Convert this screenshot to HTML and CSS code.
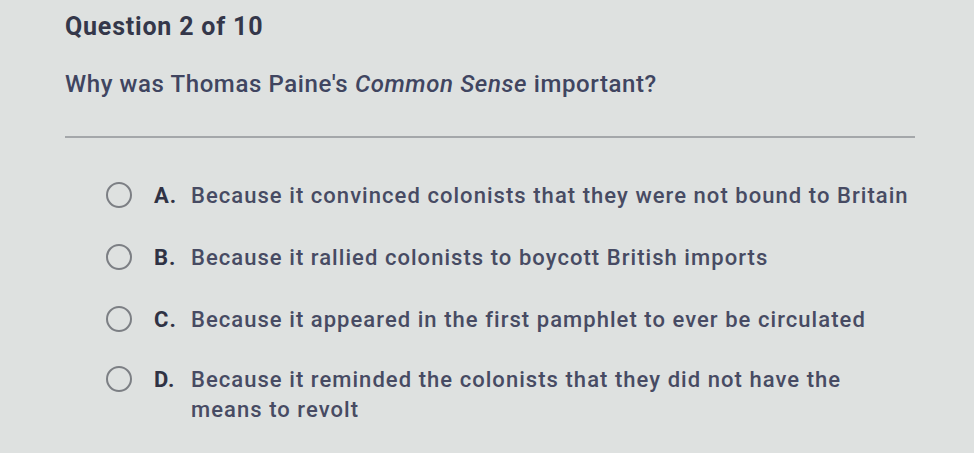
FILE: index.html
```html
<!DOCTYPE html>
<html>
<head>
<meta charset="utf-8">
<link rel="stylesheet" href="styles.css">
</head>
<body>
<div class="page">
  <h1 class="title">Question 2 of 10</h1>
  <p class="question">Why was Thomas Paine's <em>Common Sense</em> important?</p>
  <hr class="divider">
  <ul class="options">
    <li class="option"><span class="radio"></span><span class="letter">A.</span><span class="text">Because it convinced colonists that they were not bound to Britain</span></li>
    <li class="option"><span class="radio"></span><span class="letter">B.</span><span class="text">Because it rallied colonists to boycott British imports</span></li>
    <li class="option"><span class="radio"></span><span class="letter">C.</span><span class="text">Because it appeared in the first pamphlet to ever be circulated</span></li>
    <li class="option"><span class="radio"></span><span class="letter">D.</span><span class="text">Because it reminded the colonists that they did not have the<br>means to revolt</span></li>
  </ul>
</div>
</body>
</html>
```
FILE: styles.css
```css
html, body {
  margin: 0;
  padding: 0;
}
body {
  background: #dee1e0;
  font-family: Roboto, "Liberation Sans", Arial, sans-serif;
  color: #474b63;
  width: 974px;
  height: 453px;
  overflow: hidden;
}
.page {
  padding: 12px 0 0 65px;
  width: 850px;
}
.title {
  margin: 0;
  font-size: 25px;
  font-weight: 700;
  letter-spacing: 0.8px;
  color: #34374a;
  line-height: 30px;
}
.question {
  margin: 27px 0 0 0;
  font-size: 24px;
  font-weight: 500;
  letter-spacing: 0.6px;
  line-height: 30px;
  color: #404560;
}
.divider {
  margin: 37px 0 0 0;
  border: 0;
  height: 2px;
  background: #a4a7aa;
}
.options {
  list-style: none;
  margin: 43px 0 0 41px;
  padding: 0;
  display: flex;
  flex-direction: column;
  gap: 32px;
}
.option {
  display: flex;
  align-items: flex-start;
  font-size: 22px;
  font-weight: 500;
  letter-spacing: 1.05px;
  line-height: 30px;
}
.option:last-child {
  margin-top: -2px;
}
.radio {
  flex: none;
  width: 22px;
  height: 22px;
  border: 2.5px solid #7c7f84;
  border-radius: 50%;
  margin-top: 1px;
  margin-right: 22px;
}
.letter {
  flex: none;
  width: 37px;
  font-weight: 700;
  color: #2f3244;
}
.text {
  white-space: nowrap;
}
```
